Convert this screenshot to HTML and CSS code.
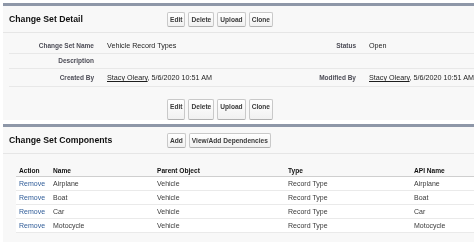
FILE: index.html
```html
<!DOCTYPE html>
<html>
<head>
<meta charset="utf-8">
<link rel="stylesheet" href="styles.css">
</head>
<body>
<div class="page">
<div class="panel">
  <div class="ph">
    <div class="pt">Change Set Detail</div>
    <div class="btns"><span class="btn">Edit</span><span class="btn">Delete</span><span class="btn">Upload</span><span class="btn">Clone</span></div>
  </div>
  <div class="detail">
    <div class="row r1">
      <div class="lbl">Change Set Name</div><div class="val">Vehicle Record Types</div>
      <div class="lbl l2">Status</div><div class="val">Open</div>
    </div>
    <div class="row r2">
      <div class="lbl">Description</div><div class="val"></div>
      <div class="lbl l2"></div><div class="val"></div>
    </div>
    <div class="row r3">
      <div class="lbl">Created By</div><div class="val"><a class="u">Stacy Oleary</a>, 5/6/2020 10:51 AM</div>
      <div class="lbl l2">Modified By</div><div class="val"><a class="u">Stacy Oleary</a>, 5/6/2020 10:51 AM</div>
    </div>
  </div>
  <div class="pf">
    <div class="btns"><span class="btn">Edit</span><span class="btn">Delete</span><span class="btn">Upload</span><span class="btn">Clone</span></div>
  </div>
</div>
<div class="panel p2">
  <div class="ph">
    <div class="pt">Change Set Components</div>
    <div class="btns"><span class="btn">Add</span><span class="btn">View/Add Dependencies</span></div>
  </div>
  <div class="tw">
    <table class="tbl">
      <tr class="hd"><th class="c1">Action</th><th class="c2">Name</th><th class="c3">Parent Object</th><th class="c4">Type</th><th class="c5">API Name</th></tr>
      <tr><td><a class="lnk">Remove</a></td><td class="nm">Airplane</td><td>Vehicle</td><td>Record Type</td><td>Airplane</td></tr>
      <tr><td><a class="lnk">Remove</a></td><td class="nm">Boat</td><td>Vehicle</td><td>Record Type</td><td>Boat</td></tr>
      <tr><td><a class="lnk">Remove</a></td><td class="nm">Car</td><td>Vehicle</td><td>Record Type</td><td>Car</td></tr>
      <tr><td><a class="lnk">Remove</a></td><td class="nm">Motocycle</td><td>Vehicle</td><td>Record Type</td><td>Motocycle</td></tr>
    </table>
  </div>
</div>
</div>
</body>
</html>
```
FILE: styles.css
```css
html, body { margin: 0; padding: 0; background: #fff; }
body {
  font-family: "Liberation Sans", Arial, sans-serif;
  font-size: 7.2px;
  color: #222;
  overflow: hidden;
  height: 242px;
  -webkit-font-smoothing: antialiased;
}
.page {
  padding: 3px 0 0 3px;
  will-change: transform;
}
.panel {
  background: #f8f8f8;
  border-top: 3px solid #8e97a8;
  width: 480px;
}
.p2 { margin-top: 4px; height: 120px; }
.ph {
  display: flex;
  align-items: center;
  height: 26px;
  border-bottom: 1px solid #e6e6e6;
  padding-left: 6px;
}
.pt { font-weight: bold; font-size: 8.7px; color: #111; width: 158px; flex: none; }
.btns { display: flex; gap: 3px; }
.btn {
  display: inline-block;
  font-size: 6.6px;
  font-weight: bold;
  color: #3a3a3a;
  border: 1px solid #c9c9c9;
  border-bottom-color: #b0b0b0;
  border-radius: 2px;
  background: linear-gradient(#ffffff, #f1f1f1);
  padding: 3px 2px;
  line-height: 7px;
}
.row {
  display: flex;
  box-sizing: border-box;
  border-bottom: 1px solid #e8e8e8;
  margin-left: 6px;
  line-height: 9px;
}
.r1 { height: 21px; padding-top: 8px; }
.r2 { height: 15px; padding-top: 2px; }
.r3 { height: 18px; padding-top: 4px; }
.lbl {
  width: 85px;
  text-align: right;
  font-weight: bold;
  font-size: 6.5px;
  color: #4d4d57;
  padding-right: 13px;
  flex: none;
}
.l2 { width: 143px; }
.val { width: 106px; flex: none; white-space: nowrap; color: #1e1e1e; }
.u { text-decoration: underline; color: #1e1e1e; }
.pf {
  display: flex;
  height: 33px;
  box-sizing: border-box;
  padding-top: 12px;
  padding-left: 164px;
}
.tw { padding: 10px 0 0 13px; }
.tbl {
  border-collapse: collapse;
  width: 470px;
  table-layout: fixed;
}
.tbl th {
  font-size: 6.6px;
  font-weight: bold;
  text-align: left;
  padding: 0 3px;
  height: 12px;
  line-height: 9px;
  border-bottom: 1px solid #cfcfcf;
  color: #111;
}
.tbl td {
  background: #fff;
  padding: 0 3px;
  height: 13px;
  line-height: 9px;
  border-bottom: 1px solid #eaeaea;
  color: #3a3a3a;
  font-size: 7px;
  white-space: nowrap;
}
.tbl td.nm { color: #3a3a3a; }
.lnk { color: #2f5c98; }
.c1 { width: 28px; }
.c2 { width: 98px; }
.c3 { width: 125px; }
.c4 { width: 120px; }
```
